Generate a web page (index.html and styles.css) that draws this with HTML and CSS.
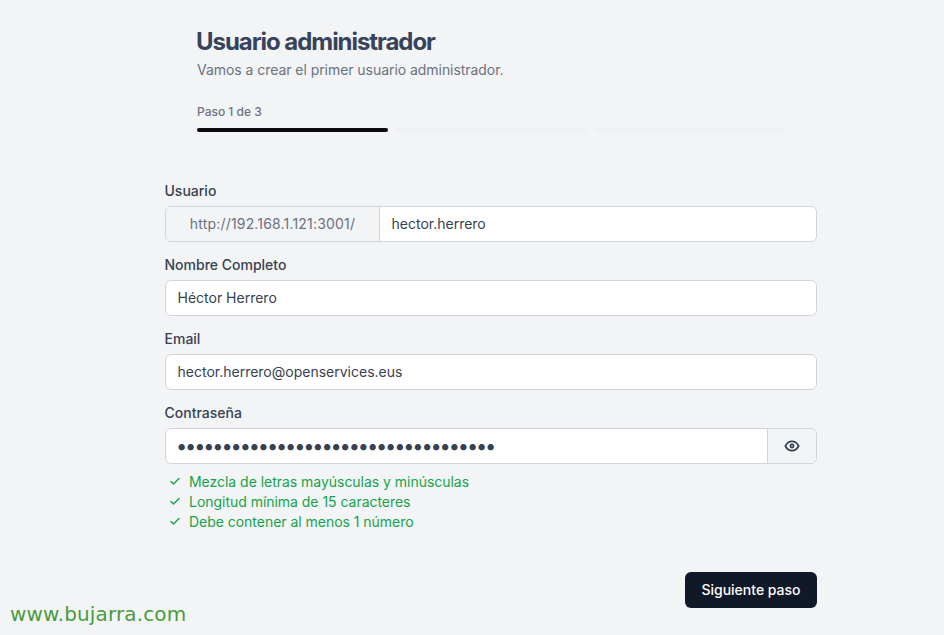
FILE: index.html
```html
<html>
	<head>
	<meta charset="utf-8">
	<title>Usuario administrador</title>
	<link rel="stylesheet" href="styles.css">
	</head>
	<body>
		<div class="page">
			<div class="header">
				<h2>Usuario administrador</h2>
				<p class="sub">Vamos a crear el primer usuario administrador.</p>
				<p class="step">Paso 1 de 3</p>
				<div class="bars">
					<div class="bar active"></div>
					<div class="bar"></div>
					<div class="bar"></div>
				</div>
			</div>
			<form>
				<div class="input-group">
					<label>Usuario</label>
					<div class="field">
						<span class="prefix">http://192.168.1.121:3001/</span>
						<span class="value">hector.herrero</span>
					</div>
				</div>
				<div class="input-group">
					<label>Nombre Completo</label>
					<div class="field"><span class="value">Héctor Herrero</span></div>
				</div>
				<div class="input-group">
					<label>Email</label>
					<div class="field"><span class="value">hector.herrero@openservices.eus</span></div>
				</div>
				<div class="input-group">
					<label>Contraseña</label>
					<div class="field">
						<span class="value dots">•••••••••••••••••••••••••••••••••••</span>
						<span class="eye">
							<svg width="16" height="16" viewBox="0 0 24 24" fill="none" stroke="#374151" stroke-width="2.6" stroke-linecap="round" stroke-linejoin="round">
								<path d="M2 12s3.6-7 10-7 10 7 10 7-3.6 7-10 7-10-7-10-7z"/>
								<circle cx="12" cy="12" r="2.4"/>
							</svg>
						</span>
					</div>
				</div>
				<ul class="hints">
					<li><svg width="12" height="12" viewBox="0 0 24 24" fill="none" stroke="#16a34a" stroke-width="2.8" stroke-linecap="round" stroke-linejoin="round"><path d="M4 13l5 5L20 7"/></svg>Mezcla de letras mayúsculas y minúsculas</li>
					<li><svg width="12" height="12" viewBox="0 0 24 24" fill="none" stroke="#16a34a" stroke-width="2.8" stroke-linecap="round" stroke-linejoin="round"><path d="M4 13l5 5L20 7"/></svg>Longitud mínima de 15 caracteres</li>
					<li><svg width="12" height="12" viewBox="0 0 24 24" fill="none" stroke="#16a34a" stroke-width="2.8" stroke-linecap="round" stroke-linejoin="round"><path d="M4 13l5 5L20 7"/></svg>Debe contener al menos 1 número</li>
				</ul>
				<div class="actions">
					<button type="button" id="button">Siguiente paso</button>
				</div>
			</form>
		</div>
		<div class="mark">www.bujarra.com</div>
	</body>
</html>
```

FILE: styles.css
```css
*{
	margin:0px;
	padding:0px;
	box-sizing: border-box;
}
body{
	font-family: Inter, "Liberation Sans", sans-serif;
	font-size: 14px;
	background: #F3F4F6;
	color: #374151;
	height: 635px;
	overflow: hidden;
}
.page{
	width: 652px;
	margin-left: 165px;
	padding-top: 28px;
}
.header{
	padding: 0px 32px;
}
.header h2{
	font-family: Inter, sans-serif;
	font-size: 24px;
	line-height: 28px;
	font-weight: 700;
	letter-spacing: -1.05px;
	margin-left: -1px;
	color: #36435A;
}
.sub{
	margin-top: 4px;
	line-height: 20px;
	color: #6B7280;
	letter-spacing: -0.05px;
}
.step{
	margin-top: 24px;
	font-size: 12px;
	line-height: 16px;
	font-weight: 500;
	color: #6B7280;
}
.bars{
	display: flex;
	gap: 8px;
	margin-top: 8px;
}
.bar{
	flex: 1;
	height: 4px;
	background: #EFF0F2;
}
.bar.active{
	border-radius: 2px;
	background: #0B0B0F;
}
form{
	margin-top: 49px;
}
.input-group{
	margin-bottom: 13px;
}
.input-group label{
	display: block;
	font-weight: 500;
	line-height: 20px;
	margin-bottom: 5px;
	margin-left: -0.5px;
}
.field{
	display: flex;
	height: 36px;
	border: 1px solid #D1D5DB;
	border-radius: 6px;
	background: white;
	overflow: hidden;
	align-items: stretch;
}
.prefix{
	width: 214px;
	display: flex;
	align-items: center;
	justify-content: center;
	padding-bottom: 1px;
	background: #F3F4F6;
	border-right: 1px solid #D1D5DB;
	color: #6B7280;
	letter-spacing: 0.18px;
}
.value{
	flex: 1;
	display: flex;
	align-items: center;
	padding: 0px 12px 1px 11.5px;
}
.dots{
	font-size: 20px;
	letter-spacing: -2.16px;
	padding-left: 10px;
}
.eye{
	width: 49px;
	display: flex;
	align-items: center;
	justify-content: center;
	background: #F3F4F6;
	border-left: 1px solid #D1D5DB;
}
.hints{
	list-style-type: none;
	margin-top: -6px;
	color: #16A34A;
}
.hints li{
	display: flex;
	align-items: center;
	gap: 8px;
	height: 20px;
	padding-left: 4px;
	letter-spacing: -0.03px;
}
.actions{
	display: flex;
	justify-content: flex-end;
	margin-top: 41px;
}
#button{
	width: 132px;
	height: 36px;
	padding-bottom: 1px;
	font-family: Inter, sans-serif;
	font-size: 14px;
	font-weight: 500;
	color: white;
	background: #111827;
	border: none;
	border-radius: 6px;
}
.mark{
	position: absolute;
	left: 10px;
	top: 602px;
	font-family: "DejaVu Sans", sans-serif;
	font-size: 20px;
	line-height: 24px;
	letter-spacing: 0.14px;
	color: #4A9B3C;
}
```
